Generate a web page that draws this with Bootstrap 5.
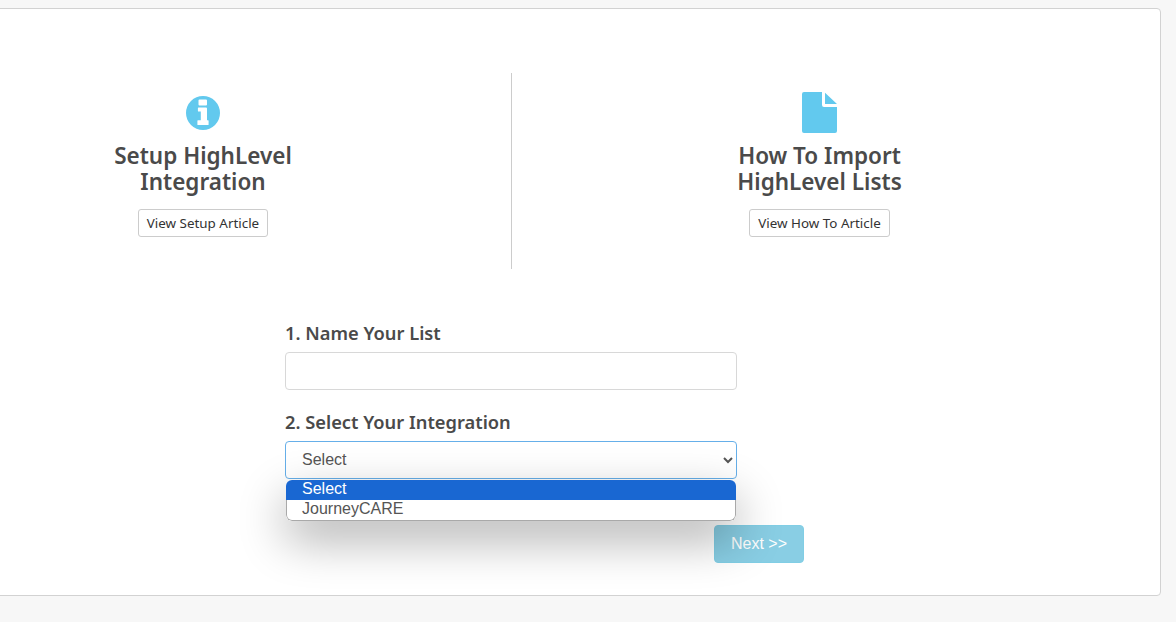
<!DOCTYPE html>
<html lang="en">
<head>
<meta charset="utf-8">
<title>Import Lists</title>
<link href="https://cdn.jsdelivr.net/npm/bootstrap@5.3.0/dist/css/bootstrap.min.css" rel="stylesheet">
<style>
html,body{height:622px;overflow:hidden}
body{background:#f7f7f7;font-family:"Noto Sans","Open Sans",sans-serif;color:#444}
.shell{margin:8px 15px 0 -12px;height:588px;background:#fff;border:1px solid #d2d2d2;border-radius:4px;padding:64px 33px 0 12px}
.intro{height:196px}
.intro-left{width:510px;padding-right:106px}
.intro-right{border-left:1px solid #ccc}
.intro-icon{fill:#62c9ee;display:block;margin:0 auto}
.info-ico{width:34px;height:34px;margin-top:23px;margin-bottom:13px}
.file-ico{width:35px;height:41px;margin-top:19px;margin-bottom:10px}
.intro-title{font-size:22.5px;line-height:26px;font-weight:600;color:#4a4a4a;margin:0 0 14px}
.view-btn{font-size:13.4px;line-height:18px;padding:4px 8px;border:1px solid #ccc;border-radius:3px;color:#333;background:#fff}
.form-area{width:519px;margin:51px 0 0 284px}
.form-field{width:452px;position:relative}
.field-label{display:block;font-size:18.3px;line-height:26px;font-weight:600;color:#4a4a4a;margin:0 0 6px}
.name-input{height:38px;border:1px solid #d8d8d8;border-radius:4px;margin-bottom:19px}
.type-select{height:38px;appearance:auto;-webkit-appearance:auto;font-family:"Liberation Sans",Arial,sans-serif;font-size:16px;color:#555;border:1px solid #66afe9;border-radius:4px;padding:4px 12px 6px}
.select-popup{position:absolute;left:1px;right:1px;top:71px;z-index:5;background:#fff;border-radius:6px;overflow:hidden;font-family:"Liberation Sans",Arial,sans-serif;font-size:16px;line-height:18px}
.popup-wrap{position:absolute;left:1px;right:1px;top:71px;height:41px;z-index:4;border-radius:6px;box-shadow:0 18px 48px rgba(0,0,0,.33)}
.popup-opt{padding:0 16px;height:20px;color:#555}
.popup-opt-last{height:21px;padding:0 15px;border:1px solid #a9a9a9;border-top:0;border-radius:0 0 6px 6px}
.popup-opt-active{background:#1967d2;color:#fff}
.next-row{margin-top:46px}
.next-btn{width:90px;height:38px;font-family:"Liberation Sans",Arial,sans-serif;font-size:16px;background:#52b8d8;border:1px solid #46b8da;color:#fff;border-radius:4px;opacity:.68;padding:0}
</style>
</head>
<body>
<div class="shell">
  <div class="d-flex intro">
    <div class="intro-left text-center">
      <svg class="intro-icon info-ico" viewBox="0 0 34 34"><path fill-rule="evenodd" d="M17 0a17 17 0 1 0 0 34a17 17 0 1 0 0-34zM13.5 3.5H20a1 1 0 0 1 1 1V8.500a1 1 0 0 1-1 1H13.500a1 1 0 0 1-1-1V4.500a1 1 0 0 1 1-1zM12.500 11.500H20a1 1 0 0 1 1 1V24.200H22a.6.6 0 0 1 .6 .6V28.400a.6.6 0 0 1-.6 .6H12a.6.6 0 0 1-.6-.6V24.800a.6.6 0 0 1 .6-.6H14.800V15.500H12.500a.6.6 0 0 1-.6-.6V12.100a.6.6 0 0 1 .6-.6z"/></svg>
      <h2 class="intro-title">Setup HighLevel<br>Integration</h2>
      <a href="#" class="btn view-btn">View Setup Article</a>
    </div>
    <div class="intro-right flex-grow-1 text-center">
      <svg class="intro-icon file-ico" viewBox="0 0 35 41"><path d="M2 0H20V13a2 2 0 0 0 2 2H35V39a2 2 0 0 1-2 2H2a2 2 0 0 1-2-2V2a2 2 0 0 1 2-2zM23 .8 35 12H23z"/></svg>
      <h2 class="intro-title">How To Import<br>HighLevel Lists</h2>
      <a href="#" class="btn view-btn">View How To Article</a>
    </div>
  </div>
  <div class="form-area">
    <div class="form-field">
      <label class="field-label" for="listName">1. Name Your List</label>
      <input id="listName" type="text" class="form-control name-input">
    </div>
    <div class="form-field">
      <label class="field-label" for="integration">2. Select Your Integration</label>
      <select id="integration" class="form-control type-select"><option>Select</option><option>JourneyCARE</option></select>
      <div class="popup-wrap"></div>
      <div class="select-popup">
        <div class="popup-opt popup-opt-active">Select</div>
        <div class="popup-opt popup-opt-last">JourneyCARE</div>
      </div>
    </div>
    <div class="d-flex justify-content-end next-row">
      <button type="button" class="btn next-btn">Next &gt;&gt;</button>
    </div>
  </div>
</div>
<script src="https://cdn.jsdelivr.net/npm/bootstrap@5.3.0/dist/js/bootstrap.bundle.min.js"></script>
</body>
</html>
